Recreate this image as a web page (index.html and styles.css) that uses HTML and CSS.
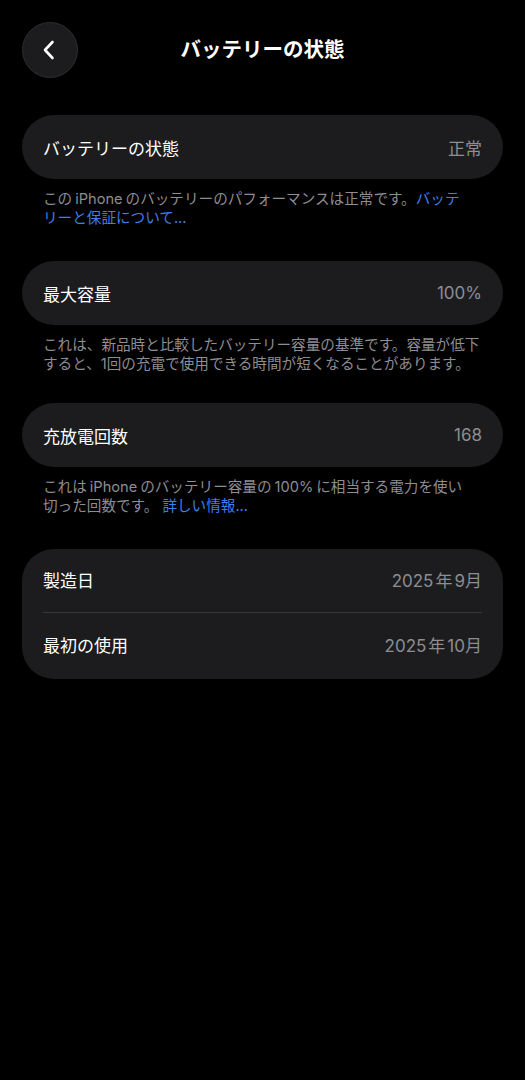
FILE: index.html
```html
<!doctype html>
<html lang="ja">
<head>
	<meta charset="utf-8" />
	<title>バッテリーの状態</title>
	<link rel="stylesheet" href="styles.css">
</head>
<body>
	<!-- ヘッダー -->
	<div class="header">
		<a href="#" class="back">
			<svg width="14" height="20" viewBox="0 0 14 20">
				<path d="M10.5 2 L3 10 L10.5 18" fill="none" stroke="#fff" stroke-width="2.6" stroke-linecap="round" stroke-linejoin="round" />
			</svg>
		</a>
		<h1>バッテリーの状態</h1>
		<span></span>
	</div>

	<div class="group">
		<div class="row">
			<span class="label">バッテリーの状態</span>
			<span class="value">正常</span>
		</div>
	</div>
	<p class="note">この<span class="lat">iPhone</span>のバッテリーのパフォーマンスは正常です。<a href="#">バッテ<br>リーと保証について...</a></p>

	<div class="group">
		<div class="row">
			<span class="label">最大容量</span>
			<span class="value">100%</span>
		</div>
	</div>
	<p class="note tight">これは、新品時と比較したバッテリー容量の基準です。容量が低下<br>すると、1回の充電で使用できる時間が短くなることがあります。</p>

	<div class="group">
		<div class="row">
			<span class="label">充放電回数</span>
			<span class="value">168</span>
		</div>
	</div>
	<p class="note">これは<span class="lat">iPhone</span>のバッテリー容量の<span class="lat">100%</span>に相当する電力を使い<br>切った回数です。 <a href="#">詳しい情報...</a></p>

	<div class="group">
		<div class="row">
			<span class="label">製造日</span>
			<span class="value">2025<span class="lat">年</span>9月</span>
		</div>
		<div class="row">
			<span class="label">最初の使用</span>
			<span class="value">2025<span class="lat">年</span>10月</span>
		</div>
	</div>
</body>
</html>
```

FILE: styles.css
```css
* {
	margin: 0;
	padding: 0;
	box-sizing: border-box;
}
body {
	background-color: #000;
	color: #fff;
	font-family: "Inter", "Noto Sans CJK JP", sans-serif;
	padding: 22px 22px 40px;
}
a {
	text-decoration: none;
}
/* ヘッダー */
.header {
	display: grid;
	grid-template-columns: 56px 1fr 56px;
	align-items: center;
	margin-bottom: 37px;
}
.back {
	width: 56px;
	height: 56px;
	border-radius: 50%;
	background-color: #1c1c1e;
	border: 1px solid #2e2e30;
	display: flex;
	align-items: center;
	justify-content: center;
	padding-right: 3px;
}
.header h1 {
	text-align: center;
	font-size: 20.5px;
	font-weight: 700;
	line-height: 1;
	margin-top: 1px;
}
/* カード */
.group {
	background-color: #1c1c1e;
	border-radius: 32px;
	padding: 0 21px;
}
.row {
	height: 64px;
	display: flex;
	align-items: center;
	justify-content: space-between;
	font-size: 17px;
}
.group .row:first-child:not(:last-child) {
	height: 63px;
	padding-bottom: 2px;
}
.row + .row {
	border-top: 1px solid #38383a;
	height: 67px;
	padding-bottom: 3px;
}
.value {
	color: #8d8d92;
}
.value .lat {
	margin: 0 2px;
}
/* 説明文 */
.note {
	color: #8d8d92;
	font-size: 14.6px;
	line-height: 19px;
	padding: 0 10px 0 21px;
	margin: 11px 0 33px;
	white-space: nowrap;
}
.note.tight {
	margin-bottom: 29px;
}
.note .lat {
	margin: 0 3px;
}
.note a {
	color: #3f7ef0;
}
```
